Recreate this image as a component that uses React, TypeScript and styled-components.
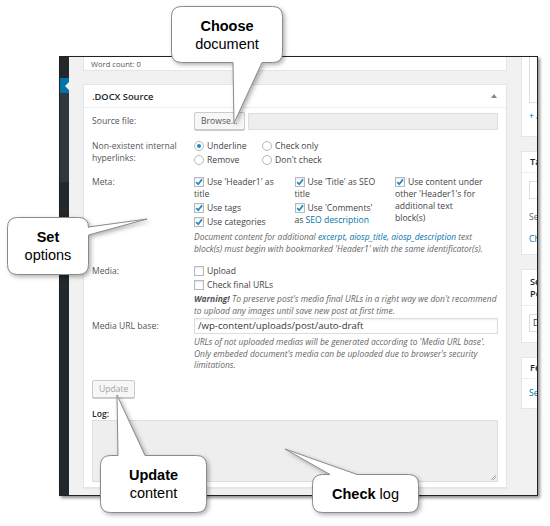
import React from 'react'
import styled, { createGlobalStyle } from 'styled-components'

const GlobalStyle = createGlobalStyle`
    html, body {
        margin: 0;
        padding: 0;
        background: #fff;
    }
    body {
        font-family: 'Open Sans', 'Liberation Sans', sans-serif;
        color: #444;
    }
    * {
        box-sizing: border-box;
    }
`

const Page = styled.div`
    position: relative;
    width: 550px;
    height: 526px;
    overflow: hidden;
    padding: 56px 0 0 59px;
`

const Window = styled.div`
    width: 479px;
    height: 440px;
    border: 1px solid #222;
    display: flex;
    background: #f1f1f1;
    box-shadow: 2px 2px 3px rgba(0, 0, 0, 0.45);
    overflow: hidden;
`

const AdminMenu = styled.div`
    width: 9px;
    flex-shrink: 0;
    display: flex;
    flex-direction: column;
    background: #23282d;
`

const MenuBlock = styled.div<{ $tone: string; $h: number }>`
    position: relative;
    height: ${({ $h }) => $h}px;
    background: ${({ $tone }) => $tone};

    &.current::after {
        content: '';
        position: absolute;
        right: 0;
        top: 50%;
        margin-top: -4px;
        border-top: 4px solid transparent;
        border-bottom: 4px solid transparent;
        border-right: 4px solid #f1f1f1;
    }
`

const Content = styled.div`
    flex: 1;
    display: flex;
    padding-left: 14px;
    overflow: hidden;
`

const MainColumn = styled.div`
    width: 424px;
    flex-shrink: 0;
    display: flex;
    flex-direction: column;
`

const WordCount = styled.div`
    height: 14px;
    background: #fff;
    border: 1px solid #e5e5e5;
    border-top: none;
    padding-left: 7px;
    display: flex;
    align-items: center;
    font-size: 7.6px;
    color: #555;
`

const Postbox = styled.div`
    margin-top: 13px;
    background: #fff;
    border: 1px solid #e5e5e5;
    box-shadow: 0 1px 1px rgba(0, 0, 0, 0.04);
`

const PostboxHeader = styled.div`
    height: 23px;
    border-bottom: 1px solid #eee;
    display: flex;
    align-items: center;
    padding: 0 9px 0 8px;

    h2 {
        margin: 0;
        font-size: 9.3px;
        font-weight: 600;
        color: #23282d;
    }

    .toggle {
        margin-left: auto;
        border-left: 3px solid transparent;
        border-right: 3px solid transparent;
        border-bottom: 4px solid #82878c;
    }
`

const PostboxBody = styled.div`
    padding: 4px 8px 5px 8px;
    font-size: 8.6px;
`

const FieldRow = styled.div<{ $gap: number }>`
    display: grid;
    grid-template-columns: 102px 1fr;
    margin-top: ${({ $gap }) => $gap}px;
`

const Label = styled.div<{ $lh: number }>`
    line-height: ${({ $lh }) => $lh}px;
    color: #555;
`

const Button = styled.button<{ $muted?: boolean }>`
    height: 18px;
    padding: 0 6px;
    font-family: 'Open Sans', 'Liberation Sans', sans-serif;
    font-size: 8.6px;
    color: ${({ $muted }) => ($muted ? '#a0a5aa' : '#555')};
    background: #f7f7f7;
    border: 1px solid #ccc;
    border-radius: 2px;
    box-shadow: 0 1px 0 #ccc;
`

const FileLine = styled.div`
    display: flex;
    gap: 3px;

    .file {
        flex: 1;
        height: 17px;
        margin-top: 1px;
        background: #eee;
        border: 1px solid #ddd;
    }
`

const RadioGrid = styled.div`
    display: grid;
    grid-template-columns: 68px 68px;
    grid-auto-rows: 14px;
    margin-top: -1px;
`

const Option = styled.label`
    display: flex;
    align-items: center;
    gap: 3px;
    white-space: nowrap;
`

const RadioDot = styled.span<{ $on?: boolean }>`
    width: 10px;
    height: 10px;
    border-radius: 50%;
    border: 1px solid #b4b9be;
    background: #fff;
    display: flex;
    align-items: center;
    justify-content: center;

    &::after {
        content: '';
        width: 4px;
        height: 4px;
        border-radius: 50%;
        background: ${({ $on }) => ($on ? '#1e8cbe' : 'transparent')};
    }
`

const CheckGrid = styled.div`
    display: grid;
    grid-template-columns: 86px 86px 1fr;
    column-gap: 14.5px;
    align-items: start;
`

const CheckItem = styled.div`
    line-height: 12px;
    margin-bottom: 2px;

    a {
        color: #0073aa;
        text-decoration: none;
    }
`

const Box = styled.span`
    display: inline-block;
    width: 10px;
    height: 10px;
    margin-right: 3px;
    vertical-align: -2px;
    border: 1px solid #b4b9be;
    background: #fff;
    box-shadow: inset 0 1px 2px rgba(0, 0, 0, 0.1);

    svg {
        display: block;
    }
`

const Note = styled.div<{ $lh: number; $gap: number }>`
    margin-top: ${({ $gap }) => $gap}px;
    font-size: 8.45px;
    font-style: italic;
    line-height: ${({ $lh }) => $lh}px;
    color: #666;

    a {
        color: #0073aa;
    }
    b {
        font-weight: 700;
        color: #555;
    }
`

const TextInput = styled.div`
    height: 16px;
    border: 1px solid #ddd;
    box-shadow: inset 0 1px 2px rgba(0, 0, 0, 0.07);
    padding-left: 3px;
    font-size: 9.6px;
    line-height: 14px;
    color: #32373c;
`

const UpdateBar = styled.div`
    margin-top: 9px;
`

const LogLabel = styled.div`
    margin-top: 11px;
    line-height: 11px;
    font-weight: 600;
    color: #23282d;
`

const LogArea = styled.div`
    position: relative;
    height: 62px;
    background: #eee;
    border: 1px solid #ddd;

    &::after {
        content: '';
        position: absolute;
        right: 1px;
        bottom: 1px;
        width: 5px;
        height: 5px;
        background: linear-gradient(135deg, transparent 45%, #aaa 45%, #aaa 55%, transparent 55%, transparent 70%, #aaa 70%, #aaa 80%, transparent 80%);
    }
`

const SideColumn = styled.div`
    width: 110px;
    flex-shrink: 0;
    margin-left: 14px;
    display: flex;
    flex-direction: column;
    gap: 14px;
    font-size: 8.6px;
`

const SideBox = styled.div<{ $h: number; $cut?: boolean }>`
    height: ${({ $h }) => $h}px;
    background: #fff;
    border: 1px solid #e5e5e5;
    border-top: ${({ $cut }) => ($cut ? 'none' : '1px solid #e5e5e5')};
    overflow: hidden;

    h3 {
        margin: 0;
        padding: 0 8px;
        min-height: 21px;
        display: flex;
        align-items: center;
        font-size: 9.2px;
        font-weight: 600;
        line-height: 11.5px;
        color: #23282d;
        border-bottom: 1px solid #eee;
    }
    h3.tall {
        padding: 6px 8px;
    }
    .inner {
        padding: 0 7px;
    }
    a {
        display: block;
        color: #0073aa;
        line-height: 12px;
        white-space: nowrap;
    }
    .hint {
        line-height: 12px;
        color: #666;
        white-space: nowrap;
    }
`

const CategoryList = styled.div`
    height: 46px;
    border: 1px solid #ddd;
    border-top: none;
`

const SideInput = styled.div<{ $gap: number }>`
    margin-top: ${({ $gap }) => $gap}px;
    height: 18px;
    border: 1px solid #ddd;
    padding-left: 3px;
    line-height: 16px;
    color: #32373c;
    white-space: nowrap;
`

type Tail = { side: 'top' | 'bottom' | 'right'; a: number; b: number; tx: number; ty: number }

const bubblePath = (w: number, h: number, r: number, t: Tail) => {
    const o = 0.5
    const L = o
    const T = o
    const R = w - o
    const B = h - o
    let d = `M ${L + r} ${T}`
    if (t.side === 'top') d += ` L ${t.a} ${T} L ${t.tx} ${t.ty} L ${t.b} ${T}`
    d += ` L ${R - r} ${T} Q ${R} ${T} ${R} ${T + r}`
    if (t.side === 'right') d += ` L ${R} ${t.a} L ${t.tx} ${t.ty} L ${R} ${t.b}`
    d += ` L ${R} ${B - r} Q ${R} ${B} ${R - r} ${B}`
    if (t.side === 'bottom') d += ` L ${t.b} ${B} L ${t.tx} ${t.ty} L ${t.a} ${B}`
    d += ` L ${L + r} ${B} Q ${L} ${B} ${L} ${B - r} L ${L} ${T + r} Q ${L} ${T} ${L + r} ${T} Z`
    return d
}

const CalloutBox = styled.div<{ $x: number; $y: number; $w: number; $h: number }>`
    position: absolute;
    left: ${({ $x }) => $x}px;
    top: ${({ $y }) => $y}px;
    width: ${({ $w }) => $w}px;
    height: ${({ $h }) => $h}px;
    display: flex;
    flex-direction: column;
    align-items: center;
    justify-content: center;
    font-family: 'Liberation Sans', Arial, sans-serif;
    font-size: 14.5px;
    line-height: 18px;
    color: #000;

    svg {
        position: absolute;
        left: 0;
        top: 0;
        overflow: visible;
        filter: drop-shadow(2px 2px 2px rgba(0, 0, 0, 0.3));
    }
    span {
        position: relative;
        white-space: nowrap;
    }
    b {
        font-weight: 700;
    }
`

const Callout = ({
    x,
    y,
    w,
    h,
    tail,
    children,
}: {
    x: number
    y: number
    w: number
    h: number
    tail: Tail
    children: React.ReactNode
}) => (
    <CalloutBox $x={x} $y={y} $w={w} $h={h}>
        <svg width={w} height={h}>
            <path d={bubblePath(w, h, 10, tail)} fill="#fff" stroke="#8a8a8a" strokeWidth="1" strokeLinejoin="round" />
        </svg>
        {children}
    </CalloutBox>
)

const Tick = () => (
    <svg width="8" height="8" viewBox="0 0 8 8">
        <path d="M1.2 4.2 L3.2 6.2 L7 1.4" fill="none" stroke="#1e8cbe" strokeWidth="1.7" />
    </svg>
)

const Check = ({ on, children }: { on?: boolean; children: React.ReactNode }) => (
    <CheckItem>
        <Box>{on && <Tick />}</Box>
        {children}
    </CheckItem>
)

export default function App() {
    return (
        <>
            <GlobalStyle />
            <Page>
                <Window>
                    <AdminMenu>
                        <MenuBlock $tone="#23282d" $h={21} />
                        <MenuBlock className="current" $tone="#0073aa" $h={15} />
                        <MenuBlock $tone="#32373c" $h={89} />
                        <MenuBlock $tone="#23282d" $h={312} />
                    </AdminMenu>
                    <Content>
                        <MainColumn>
                            <WordCount>Word count: 0</WordCount>
                            <Postbox>
                                <PostboxHeader>
                                    <h2>.DOCX Source</h2>
                                    <span className="toggle" />
                                </PostboxHeader>
                                <PostboxBody>
                                    <FieldRow $gap={0}>
                                        <Label $lh={18}>Source file:</Label>
                                        <FileLine>
                                            <Button>Browse...</Button>
                                            <div className="file" />
                                        </FileLine>
                                    </FieldRow>

                                    <FieldRow $gap={10}>
                                        <Label $lh={12}>
                                            Non-existent internal
                                            <br />
                                            hyperlinks:
                                        </Label>
                                        <RadioGrid>
                                            <Option>
                                                <RadioDot $on />
                                                Underline
                                            </Option>
                                            <Option>
                                                <RadioDot />
                                                Check only
                                            </Option>
                                            <Option>
                                                <RadioDot />
                                                Remove
                                            </Option>
                                            <Option>
                                                <RadioDot />
                                                Don't check
                                            </Option>
                                        </RadioGrid>
                                    </FieldRow>

                                    <FieldRow $gap={9}>
                                        <Label $lh={12}>Meta:</Label>
                                        <div>
                                            <CheckGrid>
                                                <div>
                                                    <Check on>Use 'Header1' as title</Check>
                                                    <Check on>Use tags</Check>
                                                    <Check on>Use categories</Check>
                                                </div>
                                                <div>
                                                    <Check on>Use 'Title' as SEO title</Check>
                                                    <Check on>
                                                        Use 'Comments' as <a>SEO description</a>
                                                    </Check>
                                                </div>
                                                <div>
                                                    <Check on>
                                                        Use content under other 'Header1's for additional text
                                                        <br />
                                                        block(s)
                                                    </Check>
                                                </div>
                                            </CheckGrid>
                                            <Note $lh={12} $gap={1}>
                                                Document content for additional <a>excerpt</a>, <a>aiosp_title</a>,{' '}
                                                <a>aiosp_description</a> text block(s) must begin with bookmarked 'Header1' with
                                                the same identificator(s).
                                            </Note>
                                        </div>
                                    </FieldRow>

                                    <FieldRow $gap={10}>
                                        <Label $lh={12}>Media:</Label>
                                        <div>
                                            <Check>Upload</Check>
                                            <Check>Check final URLs</Check>
                                            <Note $lh={12} $gap={1}>
                                                <b>Warning!</b> To preserve post's media final URLs in a right way we don't
                                                recommend to upload any images until save new post at first time.
                                            </Note>
                                        </div>
                                    </FieldRow>

                                    <FieldRow $gap={1}>
                                        <Label $lh={16}>Media URL base:</Label>
                                        <div>
                                            <TextInput>/wp-content/uploads/post/auto-draft</TextInput>
                                            <Note $lh={11.5} $gap={2}>
                                                URLs of not uploaded medias will be generated according to 'Media URL base'.
                                                Only embeded document's media can be uploaded due to browser's security
                                                limitations.
                                            </Note>
                                        </div>
                                    </FieldRow>

                                    <UpdateBar>
                                        <Button $muted>Update</Button>
                                    </UpdateBar>
                                    <LogLabel>Log:</LogLabel>
                                    <LogArea />
                                </PostboxBody>
                            </Postbox>
                        </MainColumn>

                        <SideColumn>
                            <SideBox $h={80} $cut>
                                <div className="inner">
                                    <CategoryList />
                                    <a style={{ marginTop: 7 }}>+ Add New Category</a>
                                </div>
                            </SideBox>
                            <SideBox $h={104}>
                                <h3>Tags</h3>
                                <div className="inner">
                                    <SideInput $gap={8} />
                                    <div className="hint" style={{ marginTop: 12 }}>
                                        Separate tags with commas
                                    </div>
                                    <a style={{ marginTop: 10 }}>Choose from the most used tags</a>
                                </div>
                            </SideBox>
                            <SideBox $h={74}>
                                <h3 className="tall">
                                    Select
                                    <br />
                                    Post Template
                                </h3>
                                <div className="inner">
                                    <SideInput $gap={8}>Default Template</SideInput>
                                </div>
                            </SideBox>
                            <SideBox $h={52}>
                                <h3>Featured Image</h3>
                                <div className="inner">
                                    <a style={{ marginTop: 8 }}>Set featured image</a>
                                </div>
                            </SideBox>
                        </SideColumn>
                    </Content>
                </Window>

                <Callout x={171} y={6} w={112} h={57} tail={{ side: 'bottom', a: 62, b: 91, tx: 63, ty: 117 }}>
                    <span>
                        <b>Choose</b>
                    </span>
                    <span>document</span>
                </Callout>
                <Callout x={7} y={217} w={82} h={58} tail={{ side: 'right', a: 10, b: 18, tx: 140, ty: 2 }}>
                    <span>
                        <b>Set</b>
                    </span>
                    <span>options</span>
                </Callout>
                <Callout x={100} y={455} w={107} h={58} tail={{ side: 'top', a: 18, b: 45, tx: 17, ty: -60 }}>
                    <span>
                        <b>Update</b>
                    </span>
                    <span>content</span>
                </Callout>
                <Callout x={312} y={474} w={107} h={39} tail={{ side: 'top', a: 18, b: 45, tx: -27, ty: -25 }}>
                    <span>
                        <b>Check</b> log
                    </span>
                </Callout>
            </Page>
        </>
    )
}
